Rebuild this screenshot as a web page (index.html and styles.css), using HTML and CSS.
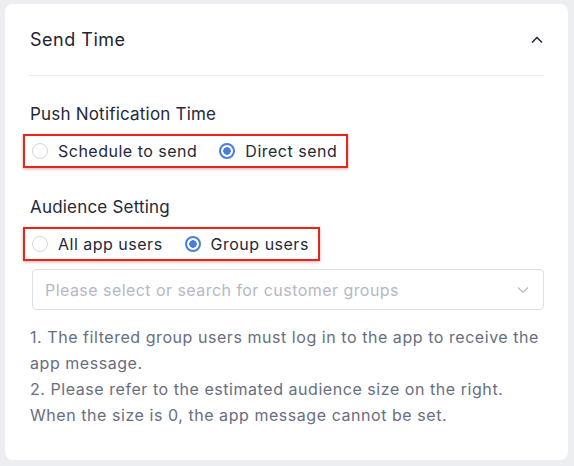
FILE: index.html
```html
<!DOCTYPE html>
<html lang="en">
<head>
    <meta charset="UTF-8">
    <meta name="viewport" content="width=device-width, initial-scale=1.0">
    <title>Send Time</title>
    <link rel="stylesheet" href="styles.css">
</head>
<body>
    <div class="card">
        <div class="card-header">
            <span class="card-title">Send Time</span>
            <svg class="collapse-icon" width="12" height="8" viewBox="0 0 12 8">
                <path d="M1 6.5 L6 1.5 L11 6.5" fill="none" stroke="#1f2433" stroke-width="1.5"/>
            </svg>
        </div>

        <div class="field">
            <div class="field-label">Push Notification Time</div>
            <div class="radio-group marked">
                <label class="radio"><span class="dot"></span>Schedule to send</label>
                <label class="radio checked"><span class="dot"></span>Direct send</label>
            </div>
        </div>

        <div class="field">
            <div class="field-label">Audience Setting</div>
            <div class="radio-group marked">
                <label class="radio"><span class="dot"></span>All app users</label>
                <label class="radio checked"><span class="dot"></span>Group users</label>
            </div>
            <div class="select">
                <span class="placeholder">Please select or search for customer groups</span>
                <svg width="12" height="8" viewBox="0 0 12 8">
                    <path d="M1 1.5 L6 6.5 L11 1.5" fill="none" stroke="#b4b9c4" stroke-width="1.2"/>
                </svg>
            </div>
            <div class="notes">
                1. The filtered group users must log in to the app to receive the app message.<br>
                2. Please refer to the estimated audience size on the right.<br>
                When the size is 0, the app message cannot be set.
            </div>
        </div>
    </div>
</body>
</html>
```

FILE: styles.css
```css
body {
    margin: 0;
    background-color: #eceef1;
    font-family: Inter, "Noto Sans", sans-serif;
    color: #242938;
}

.card {
    margin: 4px 6px 0 5px;
    height: 456px;
    box-sizing: border-box;
    background: #fff;
    border-radius: 8px;
    padding: 0 24px 0 23px;
}

.card-header {
    height: 71px;
    display: flex;
    align-items: center;
    justify-content: space-between;
    border-bottom: 1px solid #e9ebee;
}

.card-title {
    font-size: 18px;
    letter-spacing: 0.5px;
    padding-left: 2px;
    color: #1f2433;
}

.collapse-icon {
    margin-right: 1px;
}

.field {
    padding-top: 27px;
}

.field + .field {
    padding-top: 28px;
}

.field-label {
    font-size: 17px;
    letter-spacing: 0.2px;
    line-height: 22px;
    padding-left: 2px;
    margin-bottom: 9px;
}

.radio-group {
    display: inline-flex;
    align-items: center;
    gap: 22px;
    height: 30px;
    padding: 0 9px 0 7px;
    margin-left: -5px;
}

.marked {
    border: 2px solid #e3281b;
    box-shadow: 0 1px 3px rgba(120, 20, 10, 0.35);
}

.radio {
    display: flex;
    align-items: center;
    gap: 10px;
    font-size: 16px;
    letter-spacing: 0.5px;
}

.dot {
    width: 16px;
    height: 16px;
    box-sizing: border-box;
    border: 1px solid #d3d6dd;
    border-radius: 50%;
}

.checked .dot {
    border: 2px solid #4a7de0;
    background: radial-gradient(circle, #4a7de0 0 3.5px, #fff 4px);
}

.select {
    margin: 8px 0 0 4px;
    height: 41px;
    box-sizing: border-box;
    border: 1px solid #dcdfe5;
    border-radius: 4px;
    display: flex;
    align-items: center;
    justify-content: space-between;
    padding: 0 14px 0 12px;
}

.placeholder {
    font-size: 16px;
    letter-spacing: 0.45px;
    color: #b4b8c4;
}

.notes {
    margin-top: 14px;
    padding-left: 2px;
    font-size: 16px;
    letter-spacing: 0.55px;
    line-height: 26px;
    color: #686e80;
}
```
